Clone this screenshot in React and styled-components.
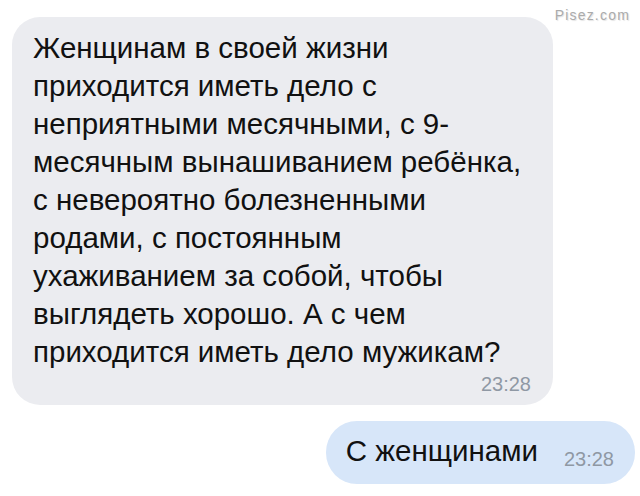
import React from "react"
import styled, { createGlobalStyle } from "styled-components"

const GlobalStyle = createGlobalStyle`
  html, body {
    margin: 0;
    padding: 0;
    background: #ffffff;
  }
  body {
    font-family: "Liberation Sans", Arial, sans-serif;
  }
`

const lines = [
  "Женщинам в своей жизни",
  "приходится иметь дело с",
  "неприятными месячными, с 9-",
  "месячным вынашиванием ребёнка,",
  "с невероятно болезненными",
  "родами, с постоянным",
  "ухаживанием за собой, чтобы",
  "выглядеть хорошо. А с чем",
  "приходится иметь дело мужикам?",
]

const App = () => (
  <Screen>
    <GlobalStyle />
    <Watermark>Pisez.com</Watermark>
    <Thread>
      <IncomingBubble>
        <MessageText>
          {lines.map((line, i) => (
            <React.Fragment key={i}>
              {line}
              {i < lines.length - 1 && <br />}
            </React.Fragment>
          ))}
        </MessageText>
        <TimeRow>
          <Time>23:28</Time>
        </TimeRow>
      </IncomingBubble>
      <OutgoingBubble>
        <ReplyText>С женщинами</ReplyText>
        <Time $inline>23:28</Time>
      </OutgoingBubble>
    </Thread>
  </Screen>
)

export default App

const Screen = styled.div`
  position: relative;
  width: 640px;
  height: 496px;
  overflow: hidden;
  background: #ffffff;
`

const Watermark = styled.div`
  position: absolute;
  top: 7px;
  right: 10px;
  font-family: "Liberation Sans", Arial, sans-serif;
  font-size: 14px;
  letter-spacing: 1.2px;
  color: #ababab;
  text-shadow: 1px 1px 1px #e2e2e2;
`

const Thread = styled.div`
  display: flex;
  flex-direction: column;
  padding: 17px 5px 0 12px;
  gap: 16px;
`

const IncomingBubble = styled.div`
  width: 541px;
  box-sizing: border-box;
  padding: 12px 22px 10px 21px;
  background: #ebecf0;
  border-radius: 28px;
`

const MessageText = styled.div`
  font-size: 29.5px;
  line-height: 38px;
  color: #111111;
`

const TimeRow = styled.div`
  display: flex;
  justify-content: flex-end;
  margin-top: 2px;
`

const Time = styled.span`
  font-size: 20px;
  line-height: 22px;
  color: #8f98a4;
  margin-top: ${p => (p.$inline ? "14px" : "0")};
  margin-left: ${p => (p.$inline ? "26px" : "0")};
`

const OutgoingBubble = styled.div`
  align-self: flex-end;
  display: flex;
  align-items: flex-start;
  padding: 13px 21px 14px 20px;
  background: #d7e6f9;
  border-radius: 31px;
`

const ReplyText = styled.span`
  font-size: 29.5px;
  line-height: 34px;
  color: #111111;
`
